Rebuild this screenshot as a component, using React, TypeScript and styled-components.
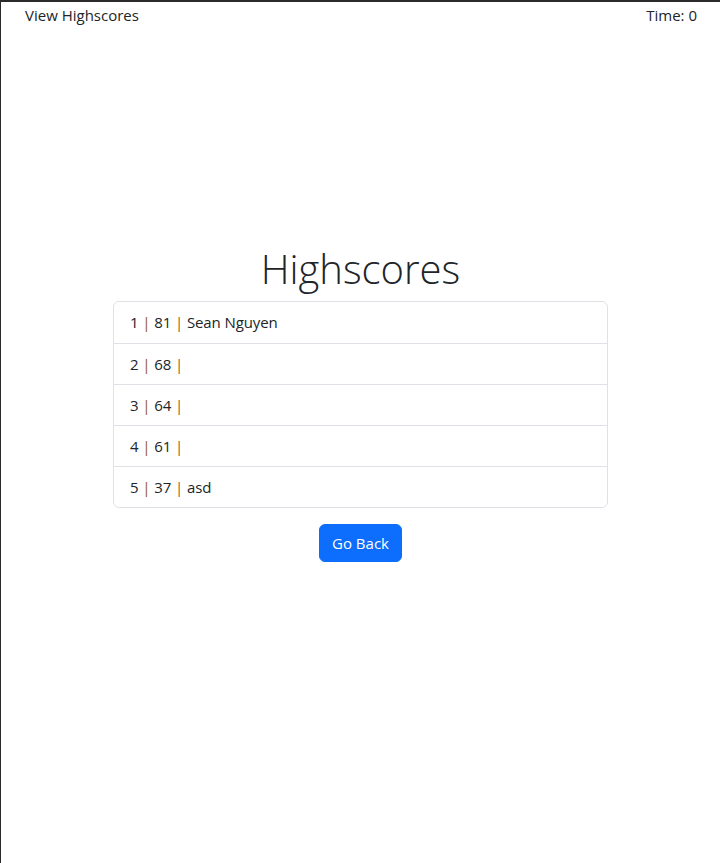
import React from "react";
import styled, { createGlobalStyle } from "styled-components";

const Global = createGlobalStyle`
  html, body { margin: 0; padding: 0; background: #fff; }
  body {
    font-family: "Open Sans", "Noto Sans", "Liberation Sans", sans-serif;
    font-size: 16px;
    line-height: 1.5;
    color: #212529;
  }
  * { box-sizing: border-box; }
`;

const Frame = styled.div`
  min-height: 100vh;
  border-top: 2px solid #2b2b2b;
  border-left: 1px solid #2b2b2b;
  display: flex;
  flex-direction: column;
`;

const TopBar = styled.header`
  display: flex;
  justify-content: space-between;
  align-items: center;
  padding: 0 23px 0 24px;
  height: 26px;
`;

const TopText = styled.span`
  font-size: 15px;
  color: #212529;
`;

const Main = styled.main`
  display: flex;
  flex-direction: column;
  align-items: center;
  padding-top: 217px;
`;

const Title = styled.h1`
  margin: 0 0 8px;
  font-size: 40px;
  font-weight: 300;
  line-height: 48px;
`;

const List = styled.ul`
  list-style: none;
  margin: 0;
  padding: 0;
  width: 495px;
  border: 1px solid #dee2e6;
  border-radius: 6px;
  overflow: hidden;
`;

const Item = styled.li`
  padding: 8px 16px;
  height: 41px;
  font-size: 15px;
  line-height: 24px;
  letter-spacing: -0.1px;
  & + & { border-top: 1px solid #dee2e6; }
`;

const Sep = styled.span`
  color: #94561c;
`;

const Button = styled.button`
  margin-top: 16px;
  background: #0d6efd;
  color: #fff;
  border: 1px solid #0d6efd;
  border-radius: 6px;
  padding: 6px 12px;
  font-family: inherit;
  font-size: 15px;
  line-height: 24px;
  cursor: pointer;
`;

const scores = [
  { rank: 1, score: 81, name: "Sean Nguyen" },
  { rank: 2, score: 68, name: "" },
  { rank: 3, score: 64, name: "" },
  { rank: 4, score: 61, name: "" },
  { rank: 5, score: 37, name: "asd" },
];

export default function App() {
  return (
    <>
      <Global />
      <Frame>
        <TopBar>
          <TopText>View Highscores</TopText>
          <TopText>Time: 0</TopText>
        </TopBar>
        <Main>
          <Title>Highscores</Title>
          <List>
            {scores.map((s) => (
              <Item key={s.rank}>
                {s.rank} <Sep>|</Sep> {s.score} <Sep>|</Sep> {s.name}
              </Item>
            ))}
          </List>
          <Button>Go Back</Button>
        </Main>
      </Frame>
    </>
  );
}
